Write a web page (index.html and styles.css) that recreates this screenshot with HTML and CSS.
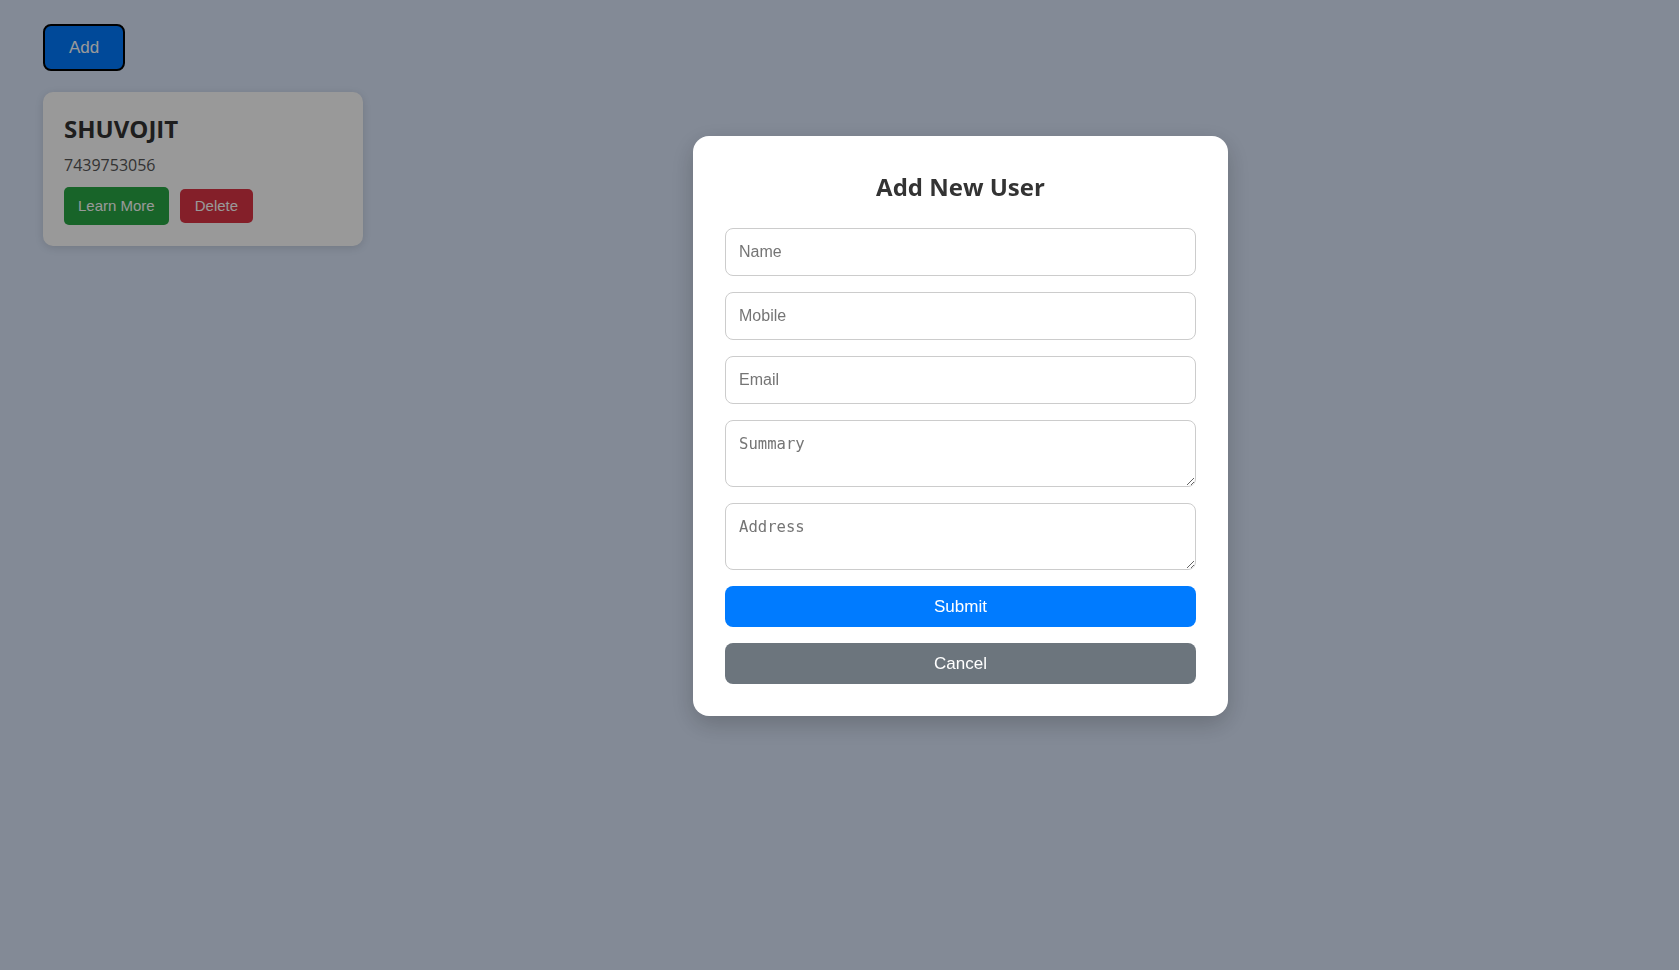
FILE: index.html
```html
<!DOCTYPE html>
<html lang="en">
<head>
<meta charset="UTF-8">
<title>Users</title>
<link rel="stylesheet" href="styles.css">
</head>
<body>
  <div class="app">
    <button class="add-btn">Add</button>
    <div class="user-list">
      <div class="user-card">
        <h3 class="user-name">SHUVOJIT</h3>
        <p class="user-phone">7439753056</p>
        <div class="card-actions">
          <button class="btn-learn">Learn More</button>
          <button class="btn-delete">Delete</button>
        </div>
      </div>
    </div>
  </div>

  <div class="overlay">
    <div class="modal">
      <h2 class="modal-title">Add New User</h2>
      <form class="modal-form">
        <input class="field" type="text" placeholder="Name">
        <input class="field" type="text" placeholder="Mobile">
        <input class="field" type="email" placeholder="Email">
        <textarea class="area" placeholder="Summary"></textarea>
        <textarea class="area" placeholder="Address"></textarea>
        <button type="button" class="btn-submit">Submit</button>
        <button type="button" class="btn-cancel">Cancel</button>
      </form>
    </div>
  </div>
</body>
</html>
```

FILE: styles.css
```css
* {
  box-sizing: border-box;
}

html, body {
  margin: 0;
  height: 100%;
}

body {
  background: #dae6fa;
  font-family: "Open Sans", "Noto Sans", sans-serif;
  color: #333;
}

.app {
  padding: 24px 43px;
  display: flex;
  flex-direction: column;
  align-items: flex-start;
  gap: 21px;
}

.add-btn {
  font-family: "Liberation Sans", Arial, sans-serif;
  font-size: 17px;
  line-height: 19px;
  padding: 12px 24px;
  background: #007bff;
  color: #fff;
  border: 2px solid #000;
  border-radius: 8px;
  cursor: pointer;
}

.user-card {
  width: 320px;
  background: #fff;
  border-radius: 10px;
  padding: 19px 20px 21px 21px;
  box-shadow: 0 2px 8px rgba(0, 0, 0, 0.12);
}

.user-name {
  margin: 0;
  font-size: 24px;
  line-height: 35px;
  font-weight: 700;
  color: #333;
}

.user-phone {
  margin: 8px 0 0;
  font-size: 16px;
  line-height: 22px;
  color: #555;
}

.card-actions {
  margin-top: 11px;
  display: flex;
  align-items: center;
  gap: 11px;
}

.btn-learn,
.btn-delete {
  font-family: "Liberation Sans", Arial, sans-serif;
  font-size: 15px;
  line-height: 18px;
  color: #fff;
  border: none;
  cursor: pointer;
}

.btn-learn {
  background: #28a745;
  padding: 10px 14px;
  border-radius: 5px;
}

.btn-delete {
  background: #dc3545;
  padding: 8px 15px;
  border-radius: 5px;
}

.overlay {
  position: fixed;
  inset: 0;
  background: rgba(0, 0, 0, 0.4);
  display: flex;
  align-items: flex-start;
  padding: 136px 0 0 693px;
}

.modal {
  width: 535px;
  background: #fff;
  border-radius: 16px;
  padding: 32px;
  box-shadow: 0 8px 24px rgba(0, 0, 0, 0.2);
}

.modal-title {
  margin: 0 0 22px;
  text-align: center;
  font-size: 24px;
  line-height: 38px;
  font-weight: 700;
  color: #333;
}

.modal-form {
  display: flex;
  flex-direction: column;
  gap: 16px;
}

.field {
  height: 48px;
  padding: 0 13px;
  border: 1px solid #ccc;
  border-radius: 8px;
  font-family: "Liberation Sans", Arial, sans-serif;
  font-size: 16px;
  color: #333;
  background: #fff;
}

.area {
  height: 67px;
  padding: 14px 13px;
  border: 1px solid #ccc;
  border-radius: 8px;
  font-family: "DejaVu Sans Mono", monospace;
  font-size: 15.6px;
  color: #333;
  background: #fff;
}

.btn-submit,
.btn-cancel {
  height: 41px;
  border: none;
  border-radius: 8px;
  font-family: "Liberation Sans", Arial, sans-serif;
  font-size: 17px;
  color: #fff;
  cursor: pointer;
}

.btn-submit {
  background: #007bff;
}

.btn-cancel {
  background: #6c757d;
}
```
